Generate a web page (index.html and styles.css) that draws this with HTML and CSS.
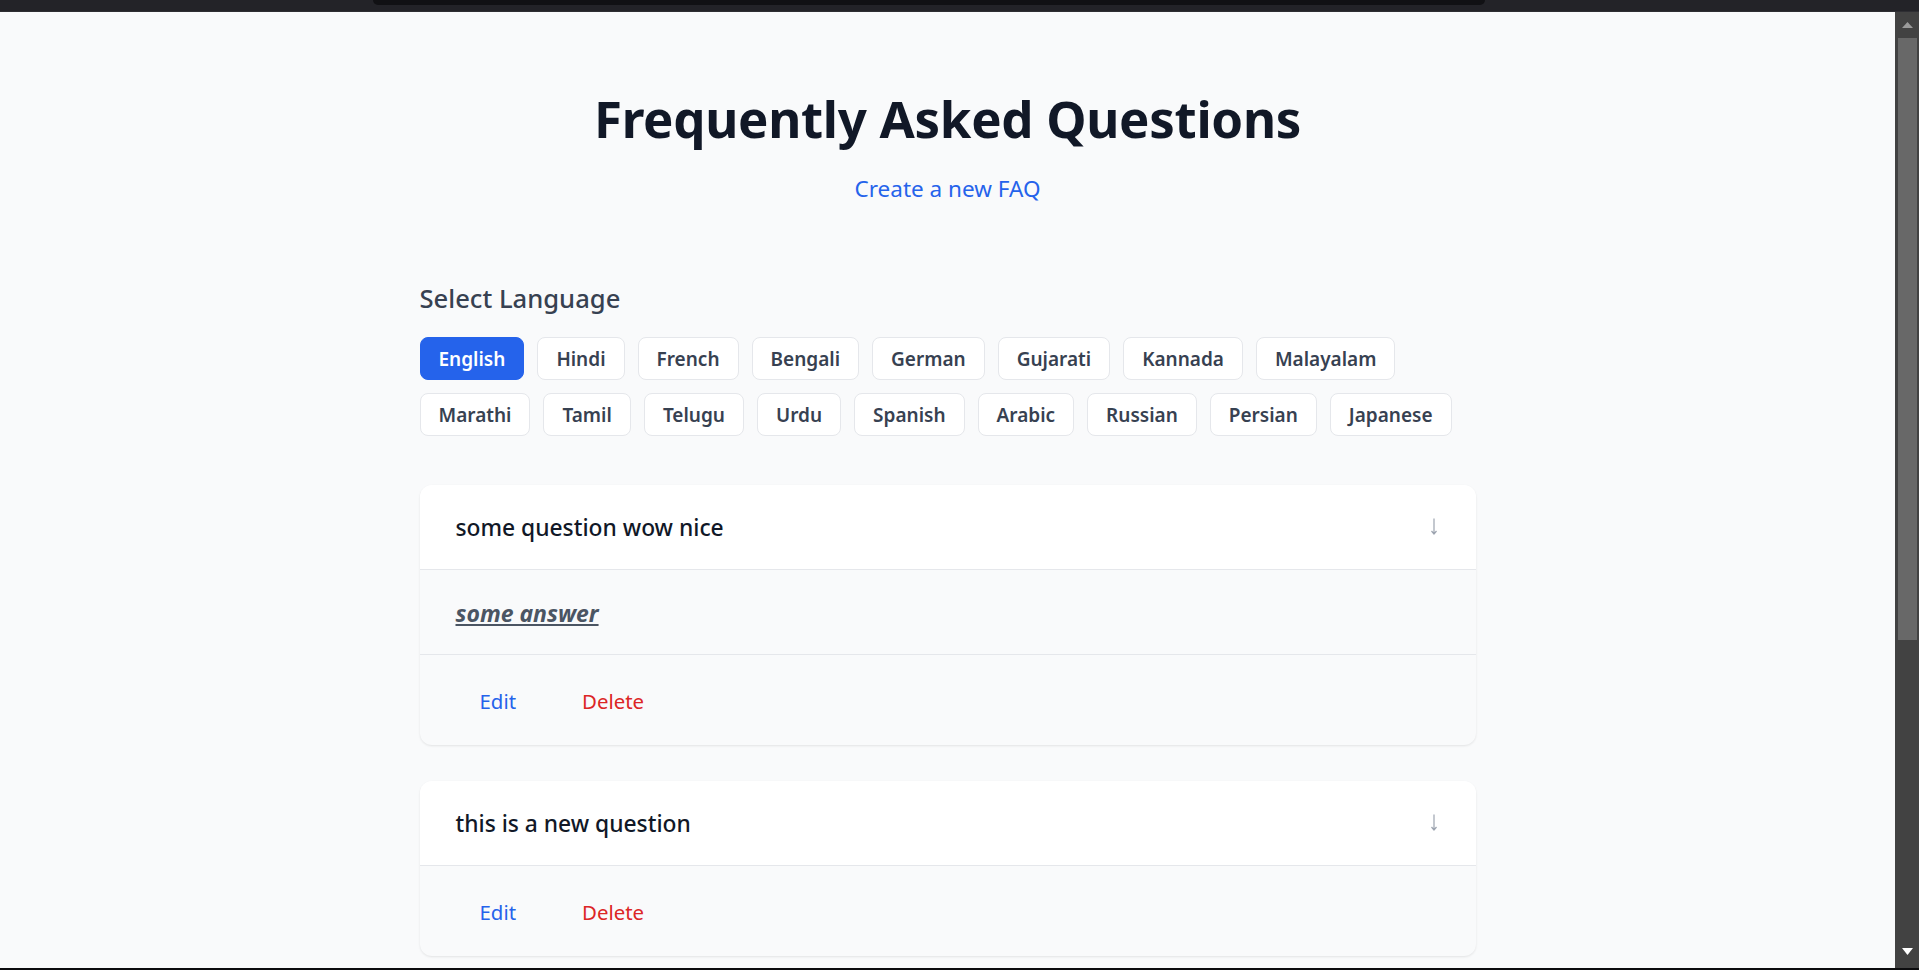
FILE: index.html
```html
<!DOCTYPE html>
<html lang="en">
<head>
<meta charset="utf-8">
<title>Frequently Asked Questions</title>
<link rel="stylesheet" href="styles.css">
</head>
<body>
<div class="window">
  <div class="chrome"><div class="notch"></div></div>
  <div class="viewport">
    <main class="page">
      <div class="container">
        <header class="hero">
          <h1 class="title">Frequently Asked Questions</h1>
          <a class="create-link" href="#">Create a new FAQ</a>
        </header>

        <section class="lang-section">
          <h2 class="lang-heading">Select Language</h2>
          <div class="lang-list">
            <div class="lang-row">
              <button class="lang-btn active">English</button>
              <button class="lang-btn">Hindi</button>
              <button class="lang-btn">French</button>
              <button class="lang-btn">Bengali</button>
              <button class="lang-btn">German</button>
              <button class="lang-btn">Gujarati</button>
              <button class="lang-btn">Kannada</button>
              <button class="lang-btn">Malayalam</button>
            </div>
            <div class="lang-row">
              <button class="lang-btn">Marathi</button>
              <button class="lang-btn">Tamil</button>
              <button class="lang-btn">Telugu</button>
              <button class="lang-btn">Urdu</button>
              <button class="lang-btn">Spanish</button>
              <button class="lang-btn">Arabic</button>
              <button class="lang-btn">Russian</button>
              <button class="lang-btn">Persian</button>
              <button class="lang-btn">Japanese</button>
            </div>
          </div>
        </section>

        <section class="faq-list">
          <article class="faq-card">
            <div class="faq-question">
              <span class="q-text">some question wow nice</span>
              <svg class="q-arrow" width="8" height="17" viewBox="0 0 8 17" aria-hidden="true"><path d="M4 0.5V15.5M1.5 13L4 16L6.5 13" fill="none" stroke="#9ca3af" stroke-width="1.2"/></svg>
            </div>
            <div class="faq-answer"><u><em><strong>some answer</strong></em></u></div>
            <div class="faq-actions">
              <button class="act-btn edit">Edit</button>
              <button class="act-btn delete">Delete</button>
            </div>
          </article>

          <article class="faq-card">
            <div class="faq-question">
              <span class="q-text">this is a new question</span>
              <svg class="q-arrow" width="8" height="17" viewBox="0 0 8 17" aria-hidden="true"><path d="M4 0.5V15.5M1.5 13L4 16L6.5 13" fill="none" stroke="#9ca3af" stroke-width="1.2"/></svg>
            </div>
            <div class="faq-actions">
              <button class="act-btn edit">Edit</button>
              <button class="act-btn delete">Delete</button>
            </div>
          </article>
        </section>
      </div>
    </main>
    <div class="scrollbar">
      <div class="sb-up"><svg width="11" height="6" viewBox="0 0 11 6"><path d="M5.5 0L11 6H0Z" fill="#9a9a9a"/></svg></div>
      <div class="sb-thumb"></div>
      <div class="sb-track"></div>
      <div class="sb-down"><svg width="11" height="7" viewBox="0 0 11 7"><path d="M0 0H11L5.5 7Z" fill="#ffffff"/></svg></div>
    </div>
  </div>
  <div class="bottom-line"></div>
</div>
</body>
</html>
```

FILE: styles.css
```css
* { box-sizing: border-box; }

html, body {
  margin: 0;
  padding: 0;
  height: 970px;
  overflow: hidden;
  font-family: "Noto Sans", "Open Sans", "Liberation Sans", sans-serif;
}

.window {
  display: flex;
  flex-direction: column;
  height: 970px;
  background: #232328;
}

.chrome {
  height: 12px;
  flex: none;
  background: #232328;
  border-bottom: 1px solid #2e2e33;
}

.notch {
  margin-left: 373px;
  width: 1112px;
  height: 5px;
  background: #111114;
  border-radius: 0 0 6px 6px;
}

.viewport {
  flex: 1;
  display: flex;
  min-height: 0;
}

.page {
  flex: 1;
  background: #f9fafb;
  overflow: hidden;
}

.container {
  width: 1056px;
  margin: 0 auto;
  padding-top: 80px;
}

.hero {
  display: flex;
  flex-direction: column;
  align-items: center;
}

.title {
  margin: 0;
  font-size: 51px;
  line-height: 52px;
  font-weight: 700;
  color: #111827;
  letter-spacing: -0.3px;
}

.create-link {
  margin-top: 28px;
  font-size: 22.5px;
  line-height: 33px;
  color: #2563eb;
  text-decoration: none;
}

.lang-section {
  margin-top: 76px;
}

.lang-heading {
  margin: 0;
  font-size: 25.6px;
  line-height: 36px;
  font-weight: 500;
  color: #374151;
}

.lang-list {
  margin-top: 20px;
  display: flex;
  flex-direction: column;
  gap: 13px;
}

.lang-row {
  display: flex;
  gap: 13px;
}

.lang-btn {
  height: 43px;
  padding: 2px 18px 0;
  border: 1px solid #e5e7eb;
  border-radius: 8px;
  background: #ffffff;
  color: #374151;
  font-family: inherit;
  font-size: 19px;
  font-weight: 600;
  line-height: 39px;
}

.lang-btn.active {
  background: #2563eb;
  border-color: #2563eb;
  color: #ffffff;
}

.faq-list {
  margin-top: 49px;
  display: flex;
  flex-direction: column;
  gap: 36px;
}

.faq-card {
  background: #f9fafb;
  border-radius: 12px;
  box-shadow: 0 1px 3px rgba(0, 0, 0, 0.06), 0 1px 2px rgba(0, 0, 0, 0.04);
  overflow: hidden;
}

.faq-question {
  display: flex;
  align-items: center;
  justify-content: space-between;
  height: 85px;
  padding: 2px 38px 0 36px;
  background: #ffffff;
  border-bottom: 1px solid #e5e7eb;
}

.q-text {
  font-size: 22.8px;
  line-height: 30px;
  font-weight: 500;
  color: #111827;
}

.q-arrow {
  display: block;
  margin-bottom: 4px;
}

.faq-answer {
  height: 85px;
  padding: 28px 36px 0;
  border-bottom: 1px solid #e5e7eb;
  font-size: 23px;
  line-height: 30px;
  color: #4b5563;
}

.faq-actions {
  display: flex;
  gap: 18px;
  height: 90px;
  padding: 32px 36px 0;
}

.act-btn {
  padding: 0 24px;
  border: none;
  background: transparent;
  font-family: inherit;
  font-size: 20.4px;
  line-height: 28px;
  height: 28px;
}

.act-btn.edit { color: #2563eb; }
.act-btn.delete { color: #dc2626; }

.scrollbar {
  width: 24px;
  flex: none;
  background: #424242;
  display: flex;
  flex-direction: column;
}

.sb-up {
  height: 26px;
  display: flex;
  align-items: center;
  justify-content: center;
  padding-left: 1px;
}

.sb-thumb {
  height: 602px;
  margin: 0 2px 0 3px;
  background: #686868;
}

.sb-track { flex: 1; }

.sb-down {
  height: 24px;
  display: flex;
  align-items: flex-start;
  justify-content: center;
  padding-top: 4px;
  padding-left: 1px;
}

.bottom-line {
  height: 2px;
  flex: none;
  background: #0c0c0e;
}
```
